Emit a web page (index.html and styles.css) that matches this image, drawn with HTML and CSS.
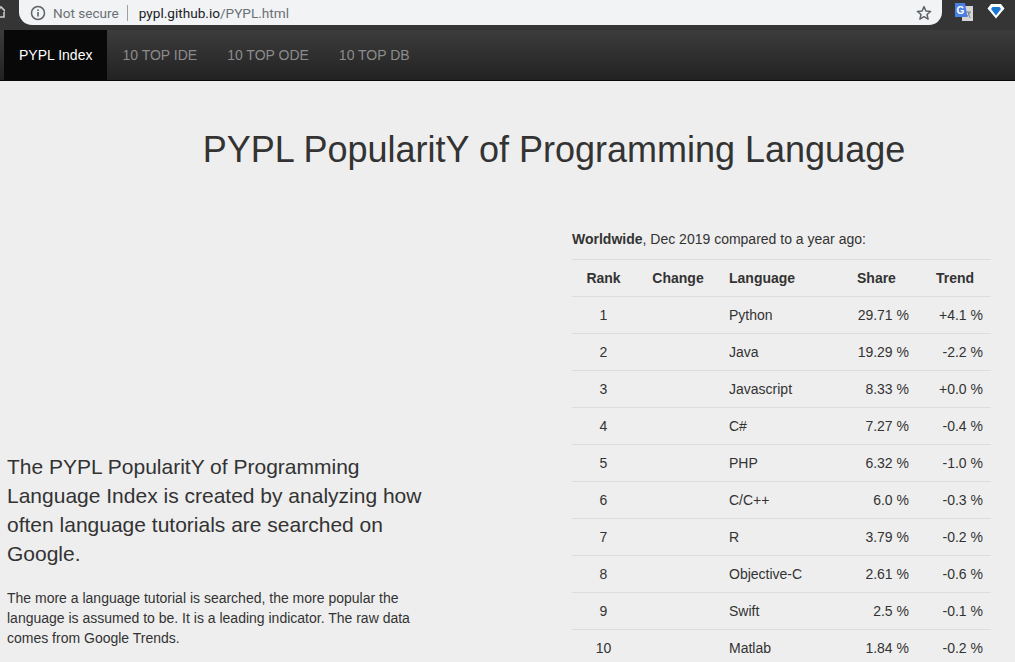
FILE: index.html
```html
<!DOCTYPE html>
<html>
<head>
<title>PYPL PopularitY of Programming Language</title>
<link rel="stylesheet" href="styles.css">
</head>
<body>

<div class="chrome">
  <svg class="home" width="5" height="14" viewBox="0 0 5 14"><path d="M-4 7 L1 2 L6 7 M-2 7 V12 H4 V7" fill="none" stroke="#c9c9c9" stroke-width="1.6"/></svg>
  <div class="omnibox">
    <svg class="info" width="16" height="16" viewBox="0 0 16 16"><circle cx="8" cy="8" r="6.5" fill="none" stroke="#5f6368" stroke-width="1.5"/><rect x="7.2" y="7" width="1.6" height="4.5" fill="#5f6368"/><rect x="7.2" y="4.4" width="1.6" height="1.6" fill="#5f6368"/></svg>
    <span class="secure">Not secure</span>
    <span class="divider"></span>
    <span class="url">pypl.github.io<span class="url-path">/PYPL.html</span></span>
    <svg class="star" width="16" height="16" viewBox="0 0 16 16"><path d="M8 1.6 L9.9 6 L14.6 6.4 L11 9.5 L12.1 14.2 L8 11.7 L3.9 14.2 L5 9.5 L1.4 6.4 L6.1 6 Z" fill="none" stroke="#5f6368" stroke-width="1.5" stroke-linejoin="round"/></svg>
  </div>
  <svg class="ext-translate" width="18" height="18" viewBox="0 0 18 18"><rect x="7" y="3" width="11" height="15" fill="#d5d5d5"/><path d="M10.5 9 H16 M13 9 L15 15 M15.5 9 L11.5 14" fill="none" stroke="#7b8a8a" stroke-width="1"/><path d="M0 0 H10 L12.5 14 H0 Z" fill="#4a80e4"/><text x="5.5" y="10.5" text-anchor="middle" font-family="Liberation Sans" font-size="10" font-weight="bold" fill="#fff">G</text></svg>
  <svg class="ext-gem" width="18" height="16" viewBox="0 0 18 16"><path d="M4 1 H14 L17.5 5.5 L9 15.5 L0.5 5.5 Z" fill="#fff"/><path d="M5.5 4 H12.5 L14 6 L9 12.5 L4 6 Z" fill="#1877d2"/></svg>
</div>

<div class="navbar">
  <a class="nav-item active" href="#">PYPL Index</a>
  <a class="nav-item" href="#">10 TOP IDE</a>
  <a class="nav-item" href="#">10 TOP ODE</a>
  <a class="nav-item" href="#">10 TOP DB</a>
</div>

<div class="main">
  <h1 class="title">PYPL PopularitY of Programming Language</h1>
  <div class="columns">
    <div class="intro">
      <p class="lead">The PYPL PopularitY of Programming Language Index is created by analyzing how often language tutorials are searched on Google.</p>
      <p class="note">The more a language tutorial is searched, the more popular the language is assumed to be. It is a leading indicator. The raw data comes from Google Trends.</p>
    </div>
    <div class="ranking">
      <p class="caption"><b>Worldwide</b>, Dec 2019 compared to a year ago:</p>
      <table class="rank-table">
        <tr><th class="rank">Rank</th><th class="change">Change</th><th class="lang">Language</th><th class="share">Share</th><th class="trend">Trend</th></tr>
        <tr><td class="rank">1</td><td></td><td>Python</td><td class="num">29.71 %</td><td class="num">+4.1 %</td></tr>
        <tr><td class="rank">2</td><td></td><td>Java</td><td class="num">19.29 %</td><td class="num">-2.2 %</td></tr>
        <tr><td class="rank">3</td><td></td><td>Javascript</td><td class="num">8.33 %</td><td class="num">+0.0 %</td></tr>
        <tr><td class="rank">4</td><td></td><td>C#</td><td class="num">7.27 %</td><td class="num">-0.4 %</td></tr>
        <tr><td class="rank">5</td><td></td><td>PHP</td><td class="num">6.32 %</td><td class="num">-1.0 %</td></tr>
        <tr><td class="rank">6</td><td></td><td>C/C++</td><td class="num">6.0 %</td><td class="num">-0.3 %</td></tr>
        <tr><td class="rank">7</td><td></td><td>R</td><td class="num">3.79 %</td><td class="num">-0.2 %</td></tr>
        <tr><td class="rank">8</td><td></td><td>Objective-C</td><td class="num">2.61 %</td><td class="num">-0.6 %</td></tr>
        <tr><td class="rank">9</td><td></td><td>Swift</td><td class="num">2.5 %</td><td class="num">-0.1 %</td></tr>
        <tr><td class="rank">10</td><td></td><td>Matlab</td><td class="num">1.84 %</td><td class="num">-0.2 %</td></tr>
      </table>
    </div>
  </div>
</div>

</body>
</html>
```

FILE: styles.css
```css
html, body {
  height: 100%;
  overflow: hidden;
}

body {
  margin: 0;
  background-color: #eee;
  color: #333;
  font-family: "Liberation Sans", Arial, Helvetica, sans-serif;
  font-size: 14px;
  line-height: 20px;
}

.chrome {
  display: flex;
  align-items: flex-start;
  height: 30px;
  background-color: #353535;
}
.home {
  margin-top: 5px;
}
.omnibox {
  display: flex;
  align-items: center;
  width: 923px;
  height: 25px;
  margin-left: 14px;
  padding-left: 11px;
  box-sizing: border-box;
  background-color: #f1f3f4;
  border-radius: 0 0 13px 13px;
  font-family: "Roboto", "Liberation Sans", sans-serif;
  font-size: 13.6px;
}
.secure {
  margin-left: 7px;
  color: #6b7075;
}
.divider {
  width: 1px;
  height: 16px;
  margin: 0 11px 0 8px;
  background-color: #9aa0a6;
}
.url {
  color: #202124;
}
.url-path {
  color: #6b7075;
}
.star {
  margin-left: auto;
  margin-right: 10px;
}
.ext-translate {
  margin: 3px 0 0 13px;
}
.ext-gem {
  margin: 3px 0 0 14px;
}

.navbar {
  display: flex;
  height: 50px;
  padding-left: 4px;
  background-image: linear-gradient(to bottom, #3c3c3c 0, #222 100%);
  border-bottom: 1px solid #080808;
}
.nav-item {
  padding: 15px;
  color: #8c8c8c;
  text-decoration: none;
}
.nav-item.active {
  background-color: #080808;
  color: #fff;
}

.title {
  margin: 0;
  padding: 49px 0 0 93px;
  font-size: 36px;
  font-weight: normal;
  line-height: 40px;
  text-align: center;
  color: #333;
}

.columns {
  display: flex;
  justify-content: space-between;
  align-items: flex-end;
  margin-top: 59px;
  padding: 0 24px 0 7px;
}

.intro {
  width: 420px;
  padding-bottom: 18px;
}
.lead {
  margin: 0 0 20px;
  font-size: 21px;
  line-height: 29px;
}
.note {
  margin: 0;
}

.ranking {
  width: 419px;
}
.caption {
  margin: 0 0 10px;
}

.rank-table {
  width: 419px;
  table-layout: fixed;
  border-collapse: collapse;
  border-spacing: 0;
}
.rank-table th,
.rank-table td {
  padding: 8px;
  border-top: 1px solid #ddd;
  text-align: left;
  white-space: nowrap;
}
.rank-table th {
  font-weight: bold;
}
.rank-table th.rank,
.rank-table td.rank {
  width: 63px;
  padding: 8px 0;
  box-sizing: border-box;
  text-align: center;
}
.rank-table th.change {
  width: 86px;
  padding: 8px 0;
  box-sizing: border-box;
  text-align: center;
}
.rank-table th.lang {
  width: 128px;
  box-sizing: border-box;
}
.rank-table th.share {
  width: 68px;
  box-sizing: border-box;
}
.rank-table th.trend {
  width: 74px;
  padding: 8px 0 8px 2px;
  box-sizing: border-box;
  text-align: center;
}
.rank-table td.num {
  text-align: right;
}
```
